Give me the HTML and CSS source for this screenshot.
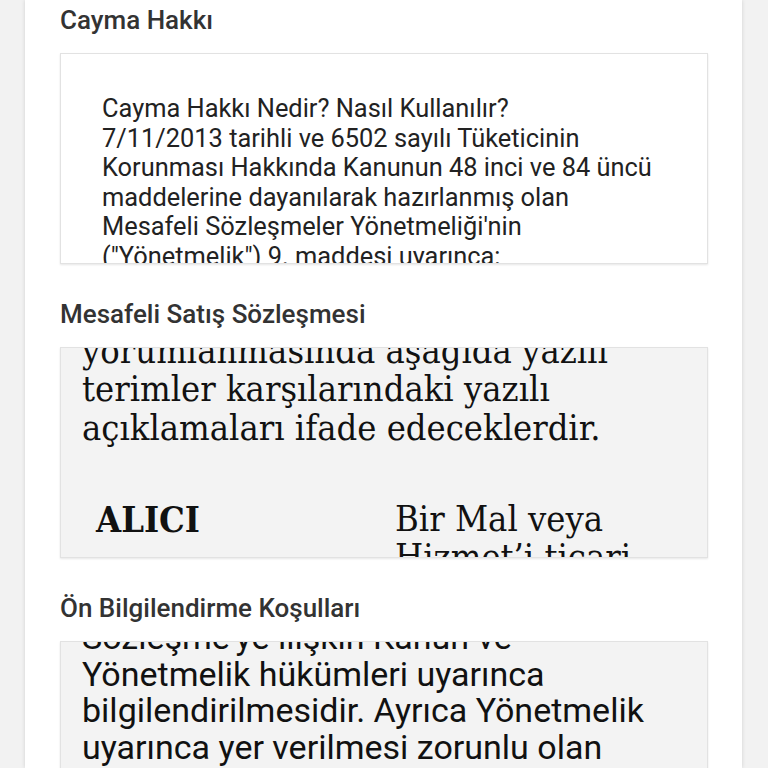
FILE: index.html
```html
<!DOCTYPE html>
<html lang="tr">
<head>
  <meta charset="UTF-8">
  <title>Sözleşmeler</title>
  <link rel="stylesheet" href="styles.css">
</head>
<body>

<div class="page">

  <div class="section">
    <h2 class="section-title">Cayma Hakkı</h2>
    <div class="doc-box doc-plain">
      <div class="doc-text">
        Cayma Hakkı Nedir? Nasıl Kullanılır?<br>
        7/11/2013 tarihli ve 6502 sayılı Tüketicinin<br>
        Korunması Hakkında Kanunun 48 inci ve 84 üncü<br>
        maddelerine dayanılarak hazırlanmış olan<br>
        Mesafeli Sözleşmeler Yönetmeliği'nin<br>
        ("Yönetmelik") 9. maddesi uyarınca;<br>
        Tüketici, mal satışına ilişkin mesafeli
      </div>
    </div>
  </div>

  <div class="section">
    <h2 class="section-title">Mesafeli Satış Sözleşmesi</h2>
    <div class="doc-box doc-serif">
      <div class="doc-text">
        <p>
          yorumlanmasında aşağıda yazılı<br>
          terimler karşılarındaki yazılı<br>
          açıklamaları ifade edeceklerdir.
        </p>
        <table class="terms">
          <tr>
            <td class="term">ALICI</td>
            <td>Bir Mal veya<br>Hizmet’i ticari</td>
          </tr>
        </table>
      </div>
    </div>
  </div>

  <div class="section">
    <h2 class="section-title">Ön Bilgilendirme Koşulları</h2>
    <div class="doc-box doc-sans">
      <div class="doc-text">
        Sözleşme'ye ilişkin Kanun ve<br>
        Yönetmelik hükümleri uyarınca<br>
        bilgilendirilmesidir. Ayrıca Yönetmelik<br>
        uyarınca yer verilmesi zorunlu olan
      </div>
    </div>
  </div>

</div>

</body>
</html>
```

FILE: styles.css
```css
body {
  margin: 0;
  background: #f2f2f2;
  font-family: Roboto, "Noto Sans", sans-serif;
  height: 768px;
  overflow: hidden;
}

.page {
  width: 717px;
  height: 768px;
  margin-left: 25px;
  background: #fff;
  box-shadow: 0 0 4px rgba(0,0,0,0.14);
  padding: 5px 34px 0 35px;
  box-sizing: border-box;
  overflow: hidden;
}

.section-title {
  margin: 0 0 18px;
  font-size: 26px;
  line-height: 30px;
  font-weight: 500;
  color: #333;
}

.section {
  margin-bottom: 35px;
}

.doc-box {
  height: 211px;
  box-sizing: border-box;
  border: 1px solid #e2e2e2;
  box-shadow: 0 1px 2px rgba(0,0,0,0.1);
  overflow: hidden;
  color: #1a1a1a;
}

/* Cayma hakkı: white, top of the text */
.doc-plain {
  background: #fff;
  padding: 40px 41px 0;
  font-size: 25.4px;
  line-height: 29.5px;
  color: #222;
}

/* Satış sözleşmesi: serif web page, scrolled */
.doc-serif {
  background: #f3f3f3;
  padding: 0 21px;
  font-family: "DejaVu Serif", serif;
  font-stretch: condensed;
  font-size: 36px;
  line-height: 38.4px;
  color: #111;
}

.doc-serif .doc-text {
  margin-top: -16.3px;
}

.doc-serif p {
  margin: 0 0 39px;
}

.terms {
  border-collapse: collapse;
  font-size: 36px;
  line-height: 38.4px;
}

.terms td {
  padding: 14px;
  vertical-align: top;
}

.terms .term {
  width: 271px;
  font-weight: bold;
}

/* Ön bilgilendirme: sans web page, scrolled */
.doc-sans {
  height: 130px;
  background: #f3f3f3;
  padding: 0 21px;
  font-size: 34px;
  line-height: 36.5px;
  color: #111;
}

.doc-sans .doc-text {
  margin-top: -22.7px;
}
```
